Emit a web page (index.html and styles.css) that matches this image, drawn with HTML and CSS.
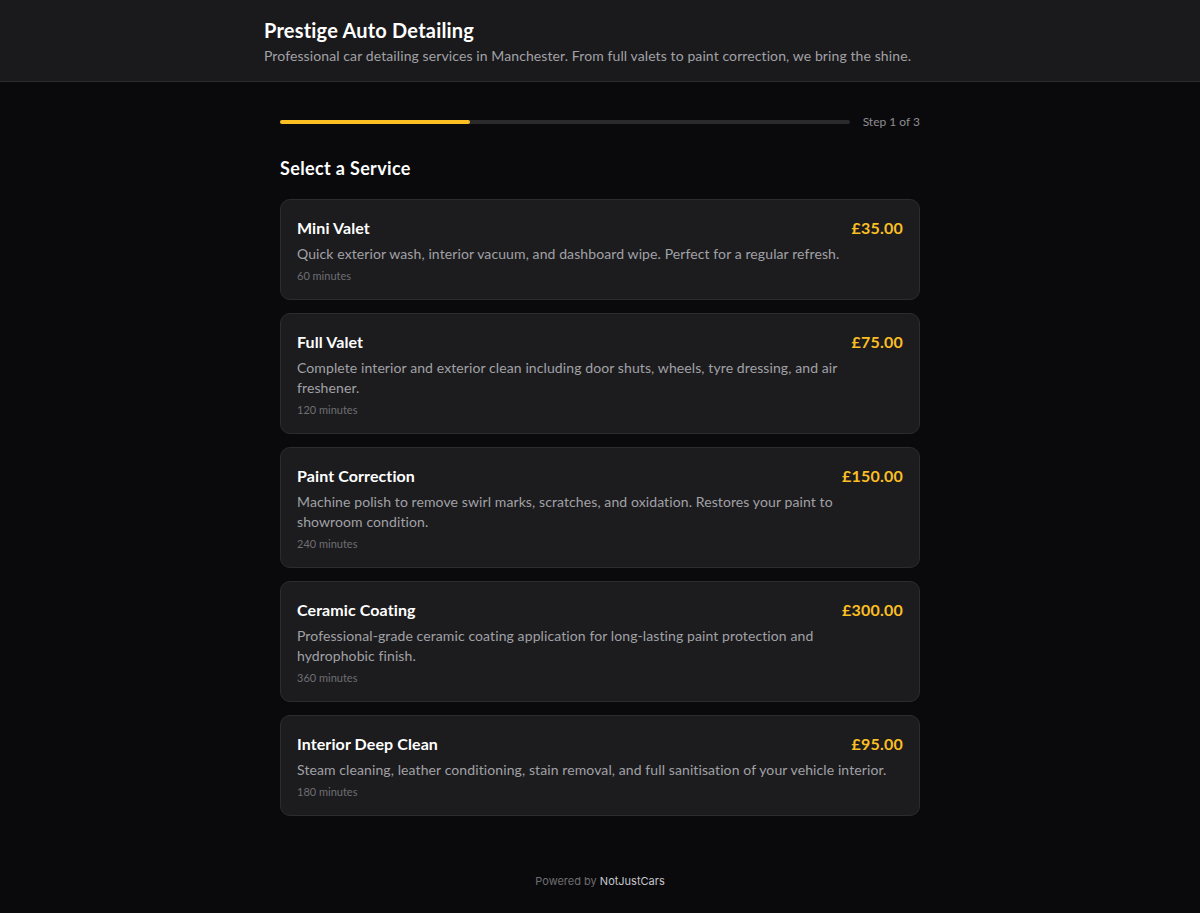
FILE: index.html
```html
<!DOCTYPE html>
<html lang="en">

<head>
  <meta charset="UTF-8">
  <meta name="viewport" content="width=device-width, initial-scale=1.0">
  <title>Prestige Auto Detailing</title>
  <link rel="stylesheet" href="styles.css">
</head>

<body>

  <header class="header">
    <div class="header-inner">
      <h1>Prestige Auto Detailing</h1>
      <p>Professional car detailing services in Manchester. From full valets to paint correction, we bring the shine.</p>
    </div>
  </header>

  <main class="container">
    <div class="progress">
      <div class="progress-track">
        <div class="progress-fill"></div>
      </div>
      <span class="progress-label">Step 1 of 3</span>
    </div>

    <h2>Select a Service</h2>

    <div class="services">
      <div class="service">
        <div class="service-top">
          <h3>Mini Valet</h3>
          <span class="service-price">£35.00</span>
        </div>
        <p class="service-desc">Quick exterior wash, interior vacuum, and dashboard wipe. Perfect for a regular refresh.</p>
        <span class="service-time">60 minutes</span>
      </div>

      <div class="service">
        <div class="service-top">
          <h3>Full Valet</h3>
          <span class="service-price">£75.00</span>
        </div>
        <p class="service-desc">Complete interior and exterior clean including door shuts, wheels, tyre dressing, and air freshener.</p>
        <span class="service-time">120 minutes</span>
      </div>

      <div class="service">
        <div class="service-top">
          <h3>Paint Correction</h3>
          <span class="service-price">£150.00</span>
        </div>
        <p class="service-desc">Machine polish to remove swirl marks, scratches, and oxidation. Restores your paint to showroom condition.</p>
        <span class="service-time">240 minutes</span>
      </div>

      <div class="service">
        <div class="service-top">
          <h3>Ceramic Coating</h3>
          <span class="service-price">£300.00</span>
        </div>
        <p class="service-desc">Professional-grade ceramic coating application for long-lasting paint protection and hydrophobic finish.</p>
        <span class="service-time">360 minutes</span>
      </div>

      <div class="service">
        <div class="service-top">
          <h3>Interior Deep Clean</h3>
          <span class="service-price">£95.00</span>
        </div>
        <p class="service-desc">Steam cleaning, leather conditioning, stain removal, and full sanitisation of your vehicle interior.</p>
        <span class="service-time">180 minutes</span>
      </div>
    </div>
  </main>

  <footer class="footer">
    Powered by <span>NotJustCars</span>
  </footer>

</body>

</html>
```

FILE: styles.css
```css
* {
  box-sizing: border-box;
}

body {
  margin: 0;
  font-family: Lato, "Noto Sans", sans-serif;
  background-color: #0a0a0c;
  color: #fff;
}

.header {
  background-color: #1a1a1c;
  border-bottom: 1px solid #2c2c2e;
  padding: 16px 0 15px;
}

.header-inner {
  max-width: 672px;
  margin: 0 auto;
}

.header h1 {
  margin: 0;
  font-size: 20px;
  font-weight: 700;
  line-height: 28px;
  letter-spacing: 0.2px;
}

.header p {
  margin: 2px 0 0;
  font-size: 14px;
  line-height: 20px;
  letter-spacing: 0.1px;
  color: #a1a1a6;
}

.container {
  max-width: 640px;
  margin: 0 auto;
  padding-top: 32px;
}

.progress {
  display: flex;
  align-items: center;
  gap: 13px;
}

.progress-track {
  flex: 1;
  height: 4px;
  background-color: #2a2a2c;
  border-radius: 2px;
}

.progress-fill {
  width: 33.3%;
  height: 100%;
  background-color: #fbbf24;
  border-radius: 2px;
}

.progress-label {
  font-size: 12px;
  line-height: 16px;
  color: #8e8e93;
}

h2 {
  margin: 24px 0 17px;
  font-size: 18px;
  font-weight: 700;
  line-height: 28px;
  letter-spacing: 0.35px;
}

.services {
  display: flex;
  flex-direction: column;
  gap: 13px;
}

.service {
  background-color: #1c1c1e;
  border: 1px solid #2c2c2e;
  border-radius: 10px;
  padding: 16px 16px 15px;
}

.service-top {
  display: flex;
  justify-content: space-between;
  align-items: center;
}

.service h3 {
  margin: 0;
  font-size: 16px;
  font-weight: 700;
  line-height: 24px;
  letter-spacing: 0.1px;
}

.service-desc {
  margin: 4px 0;
  padding-right: 12px;
  font-size: 14px;
  line-height: 20px;
  letter-spacing: 0.1px;
  color: #a1a1a6;
}

.service-time {
  display: block;
  font-size: 11px;
  line-height: 16px;
  color: #6e6e73;
}

.service-price {
  font-size: 16px;
  font-weight: 700;
  line-height: 24px;
  letter-spacing: 0.2px;
  color: #fbbf24;
}

.footer {
  text-align: center;
  font-family: Inter, sans-serif;
  font-size: 11px;
  line-height: 16px;
  color: #6e6e73;
  padding: 57px 0 24px;
}

.footer span {
  color: #c7c7cc;
}
```
